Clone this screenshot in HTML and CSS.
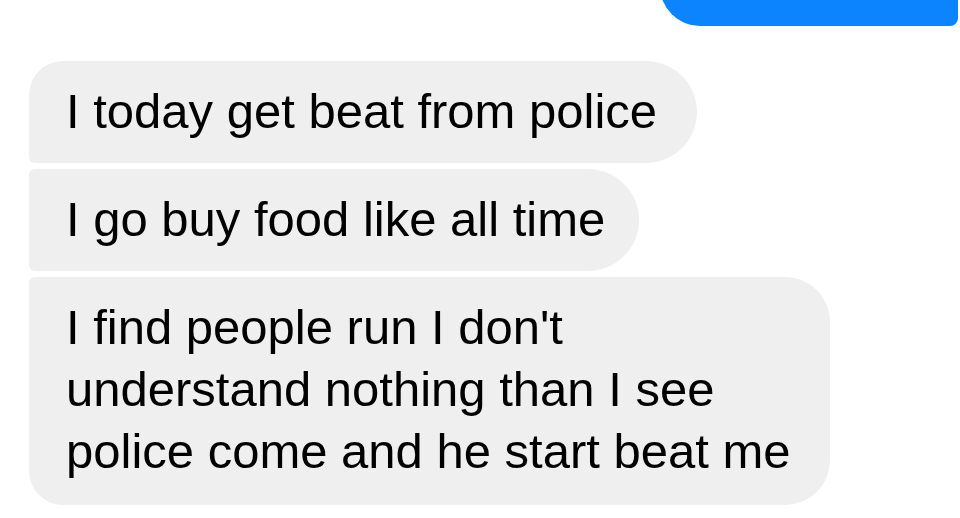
FILE: index.html
```html
<!DOCTYPE html>
<html lang="en">
<head>
<meta charset="utf-8">
<title>Messages</title>
<link rel="stylesheet" href="styles.css">
</head>
<body>
<div class="thread">
  <div class="row-out">
    <div class="bubble-out"></div>
  </div>
  <div class="group-in">
    <div class="bubble bubble-first">I today get beat from police</div>
    <div class="bubble bubble-mid">I go buy food like all time</div>
    <div class="bubble bubble-last">I find people run I don't understand nothing than I see police come and he start beat me</div>
  </div>
</div>
</body>
</html>
```

FILE: styles.css
```css
html, body {
  margin: 0;
  padding: 0;
  background: #ffffff;
}

.thread {
  width: 960px;
  height: 518px;
  overflow: hidden;
  display: flex;
  flex-direction: column;
  font-family: "Liberation Sans", Arial, Helvetica, sans-serif;
}

.row-out {
  display: flex;
  justify-content: flex-end;
  padding-right: 2px;
}

.bubble-out {
  width: 298px;
  height: 86px;
  margin-top: -60px;
  background: #0b84fe;
  border-radius: 40px 8px 8px 40px;
}

.group-in {
  display: flex;
  flex-direction: column;
  align-items: flex-start;
  gap: 6px;
  padding-left: 29px;
  margin-top: 35px;
}

.bubble {
  box-sizing: border-box;
  background: #efefef;
  color: #000000;
  font-size: 49px;
  line-height: 62px;
  padding: 19px 36px 21px 37px;
  max-width: 801px;
}

.bubble-first {
  border-radius: 34px 51px 51px 6px;
  padding-right: 40px;
}

.bubble-mid {
  border-radius: 6px 51px 51px 6px;
  padding-right: 34px;
}

.bubble-last {
  width: 801px;
  padding-bottom: 23px;
  border-radius: 6px 45px 45px 34px;
}
```
